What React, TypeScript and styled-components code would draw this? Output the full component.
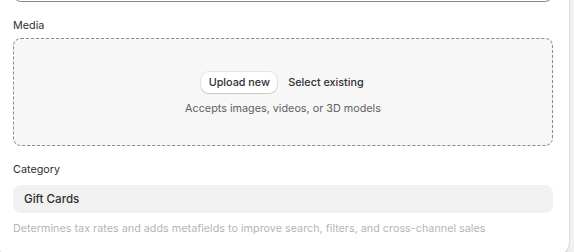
import React from "react";
import styled, { createGlobalStyle } from "styled-components";

const Global = createGlobalStyle`
  html, body { margin: 0; padding: 0; background: #f1f1f1; }
  body { font-family: Inter, "Noto Sans", "Liberation Sans", sans-serif; color: #303030; overflow: hidden; }
  * { box-sizing: border-box; }
`;

const Page = styled.div`
  width: 574px;
  height: 252px;
  overflow: hidden;
`;

const Card = styled.div`
  margin: -48px 0 0 -3px;
  width: 572px;
  background: #ffffff;
  border-radius: 12px;
  padding: 16px 16px 18px 16px;
  box-shadow: 0 0 0 1px rgba(26, 26, 26, 0.07), 0 1px 1px rgba(26, 26, 26, 0.18);
  display: flex;
  flex-direction: column;
`;

const TopInput = styled.div`
  height: 34px;
  border: 1px solid #8a8a8a;
  border-radius: 8px;
  background: #fff;
`;

const Field = styled.div<{ $top: number }>`
  display: flex;
  flex-direction: column;
  margin-top: ${(p) => p.$top}px;
`;

const Label = styled.div<{ $gap: number }>`
  font-size: 10.8px;
  line-height: 20px;
  color: #303030;
  margin-bottom: ${(p) => p.$gap}px;
`;

const DropZone = styled.div`
  height: 108px;
  border: 1px dashed #8a8a8a;
  border-radius: 8px;
  background: #f7f7f7;
  display: flex;
  flex-direction: column;
  align-items: center;
  justify-content: center;
  gap: 8px;
  padding-top: 5px;
`;

const Actions = styled.div`
  display: flex;
  align-items: center;
  gap: 10px;
`;

const UploadButton = styled.button`
  font-family: inherit;
  font-size: 10.8px;
  font-weight: 550;
  color: #303030;
  height: 21px;
  width: 76px;
  padding: 0;
  border: none;
  border-radius: 8px;
  background: #ffffff;
  box-shadow: 0 0 0 1px rgba(0, 0, 0, 0.08), 0 1px 1px rgba(0, 0, 0, 0.12);
  cursor: pointer;
`;

const PlainButton = styled.button`
  font-family: inherit;
  font-size: 10.8px;
  font-weight: 550;
  color: #303030;
  background: none;
  border: none;
  padding: 0 1px;
  height: 21px;
  cursor: pointer;
`;

const Hint = styled.div`
  font-size: 10.8px;
  line-height: 16px;
  color: #616161;
`;

const SelectBox = styled.div`
  height: 28px;
  border-radius: 8px;
  background: #f1f1f1;
  display: flex;
  align-items: center;
  padding: 0 11px;
  font-size: 11.6px;
  font-weight: 500;
  color: #303030;
`;

const HelpText = styled.div`
  margin-top: 8px;
  font-size: 10.8px;
  line-height: 16px;
  color: #b5b5b5;
`;

export default function App() {
  return (
    <Page>
      <Global />
      <Card>
        <TopInput />
        <Field $top={14}>
          <Label $gap={2}>Media</Label>
          <DropZone>
            <Actions>
              <UploadButton>Upload new</UploadButton>
              <PlainButton>Select existing</PlainButton>
            </Actions>
            <Hint>Accepts images, videos, or 3D models</Hint>
          </DropZone>
        </Field>
        <Field $top={14}>
          <Label $gap={5}>Category</Label>
          <SelectBox>Gift Cards</SelectBox>
          <HelpText>
            Determines tax rates and adds metafields to improve search, filters, and cross-channel sales
          </HelpText>
        </Field>
      </Card>
    </Page>
  );
}
